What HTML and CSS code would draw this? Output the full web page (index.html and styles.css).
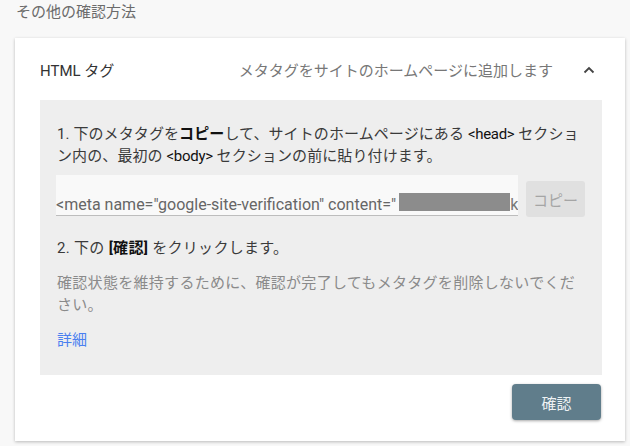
FILE: index.html
```html
<!DOCTYPE html>
<html lang="ja">
<head>
  <meta charset="UTF-8">
  <title>その他の確認方法</title>
  <link rel="stylesheet" href="styles.css">
</head>
<body>
  <h2 class="section-title">その他の確認方法</h2>

  <div class="card">
    <!-- 見出し行 -->
    <div class="card-header">
      <span class="card-title">HTML タグ</span>
      <span class="card-desc">メタタグをサイトのホームページに追加します</span>
      <svg class="chevron" width="12" height="8" viewBox="0 0 12 8">
        <path d="M1.5 6.5 L6 2 L10.5 6.5" fill="none" stroke="#444" stroke-width="1.8"/>
      </svg>
    </div>

    <!-- 手順 -->
    <div class="panel">
      <p class="step step-1">1. 下のメタタグを<b>コピー</b>して、サイトのホームページにある <span class="tag">&lt;head&gt;</span> セクショ<br>ン内の、最初の <span class="tag">&lt;body&gt;</span> セクションの前に貼り付けます。</p>

      <div class="copy-row">
        <div class="meta-field">
          <span class="meta-text">&lt;meta name="google-site-verification" content="</span><span class="redacted"></span><span class="meta-end">k</span>
        </div>
        <button class="copy-btn">コピー</button>
      </div>

      <p class="step step-2">2. 下の <b>[確認]</b> をクリックします。</p>

      <p class="note">確認状態を維持するために、確認が完了してもメタタグを削除しないでください。</p>

      <a class="more" href="#">詳細</a>
    </div>

    <div class="actions">
      <button class="verify-btn">確認</button>
    </div>
  </div>
</body>
</html>
```

FILE: styles.css
```css
* {
  box-sizing: border-box;
  margin: 0;
  padding: 0;
}

body {
  background: #f8f8f8;
  font-family: Roboto, "Noto Sans CJK JP", sans-serif;
  color: #333;
  width: 630px;
  height: 446px;
  overflow: hidden;
}

.section-title {
  font-size: 15px;
  font-weight: 400;
  color: #6b6b6b;
  line-height: 24px;
  padding: 0 0 0 16px;
  margin-bottom: 14px;
}

/* カード本体 */
.card {
  background: #fff;
  margin: 0 5px 0 15px;
  height: 403px;
  box-shadow: 0 1px 3px rgba(0, 0, 0, 0.25);
  padding: 0 23px 0 25px;
}

.card-header {
  display: flex;
  align-items: center;
  height: 62px;
  padding-top: 1px;
  font-size: 15px;
}

.card-title {
  color: #333;
  flex: 1;
}

.card-desc {
  color: #777;
  margin-right: 30px;
}

.chevron {
  margin-right: 7px;
}

.panel {
  background: #eeeeee;
  padding: 23px 22px 24px 17px;
  font-size: 15px;
  line-height: 22px;
}

.step {
  color: #3a3a3a;
  letter-spacing: 0.3px;
}

.step-1 {
  letter-spacing: 0.1px;
}

.step b {
  font-weight: 700;
  color: #111;
}

.tag {
  color: #111;
  letter-spacing: -0.3px;
}

.copy-row {
  display: flex;
  align-items: flex-start;
  margin-top: 8px;
  margin-left: -1px;
}

.meta-field {
  flex-shrink: 0;
  width: 462px;
  height: 41px;
  background: #f9f9f9;
  border-bottom: 1px solid #bdbdbd;
  padding: 20px 0 0 0;
  white-space: nowrap;
  overflow: hidden;
  font-size: 16px;
  line-height: 20px;
  color: #666;
  display: flex;
}

.redacted {
  flex-shrink: 0;
  display: inline-block;
  width: 111px;
  height: 18px;
  background: #8c8c8c;
  margin-left: 3px;
  margin-top: -2px;
}

.meta-end {
  color: #777;
}

.copy-btn {
  flex-shrink: 0;
  margin-left: 8px;
  margin-top: 6px;
  width: 59px;
  height: 36px;
  background: #e0e0e0;
  border: none;
  border-radius: 3px;
  color: #a5a5a5;
  font-family: Roboto, "Noto Sans CJK JP", sans-serif;
  font-size: 15px;
}

.step-2 {
  margin-top: 20px;
}

.note {
  margin-top: 13px;
  color: #8a8a8a;
  letter-spacing: 0.3px;
}

.more {
  display: inline-block;
  margin-top: 13px;
  color: #4a80f0;
  text-decoration: none;
}

.actions {
  display: flex;
  justify-content: flex-end;
  padding-top: 9px;
}

.verify-btn {
  width: 89px;
  height: 36px;
  background: #607d8b;
  border: none;
  border-radius: 4px;
  color: #eef2f4;
  font-family: Roboto, "Noto Sans CJK JP", sans-serif;
  font-size: 15px;
  box-shadow: 0 1px 3px rgba(0, 0, 0, 0.35);
  margin-right: 1px;
}
```
